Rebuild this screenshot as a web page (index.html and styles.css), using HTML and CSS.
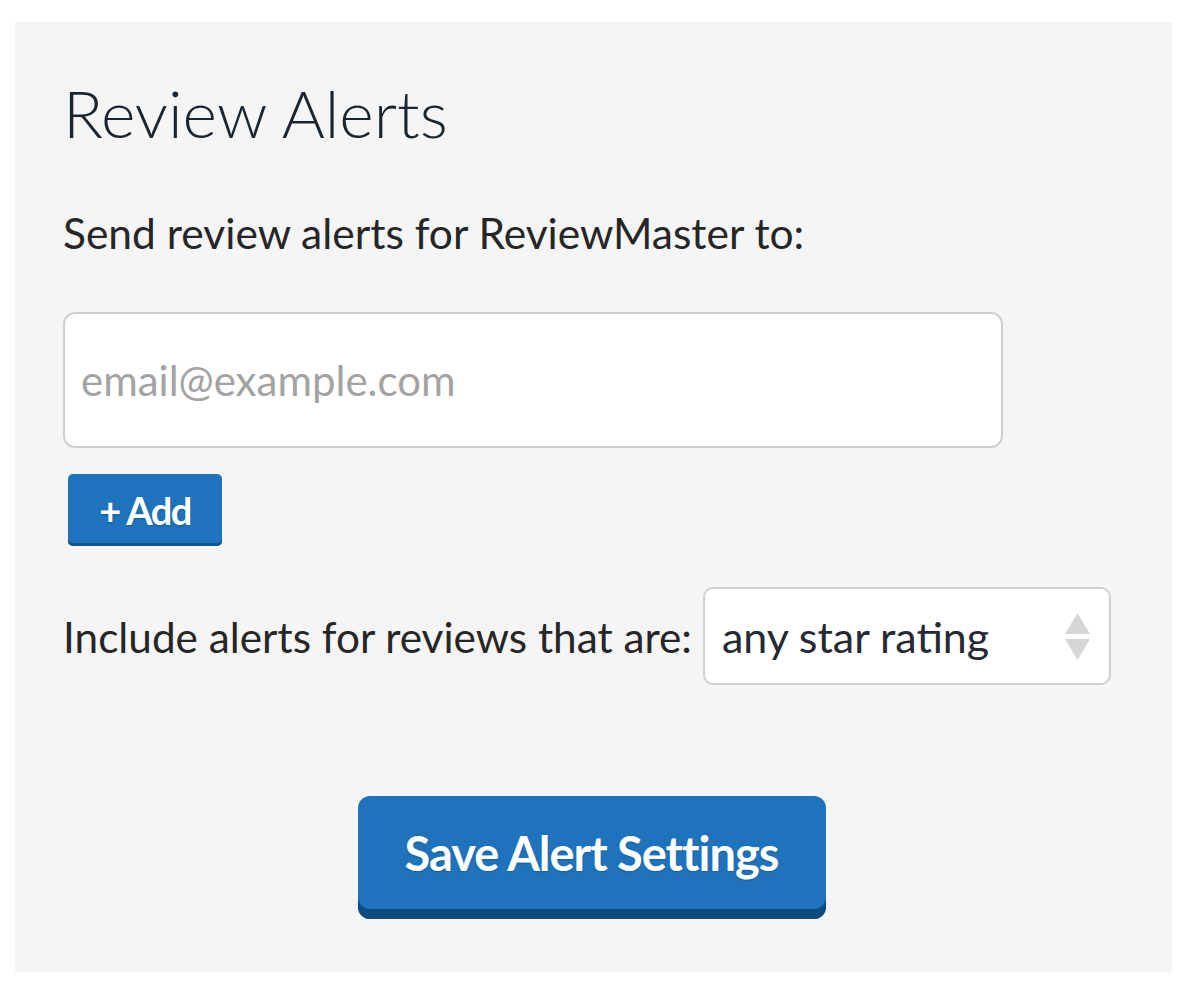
FILE: index.html
```html
<!DOCTYPE html>
<html>
<head>
<meta charset="utf-8">
<link rel="stylesheet" href="styles.css">
</head>
<body>
<div class="panel">
  <h1 class="title">Review Alerts</h1>
  <p class="lead">Send review alerts for ReviewMaster to:</p>
  <input class="email" type="text" placeholder="email@example.com">
  <button class="btn btn-add">+ Add</button>
  <div class="row">
    <span class="row-label">Include alerts for reviews that are:</span>
    <div class="select">
      <span class="select-value">any star rating</span>
      <svg class="select-arrows" width="25" height="47" viewBox="0 0 25 47">
        <path d="M12.5 0 L25 21 L0 21 Z" fill="#d6d6d6"/>
        <path d="M0 26 L25 26 L12.5 47 Z" fill="#d6d6d6"/>
      </svg>
    </div>
  </div>
  <div class="actions">
    <button class="btn btn-save">Save Alert Settings</button>
  </div>
</div>
</body>
</html>
```

FILE: styles.css
```css
html, body {
  margin: 0;
  padding: 0;
  background: #ffffff;
}
body {
  font-family: Lato, "Open Sans", sans-serif;
  color: #222;
}
.panel {
  box-sizing: border-box;
  margin: 22px 10px 0 15px;
  width: 1157px;
  height: 950px;
  background: #f5f5f5;
  padding: 51px 0 0 48px;
  display: flex;
  flex-direction: column;
  align-items: flex-start;
}
.title {
  margin: 0;
  font-weight: 300;
  font-size: 66px;
  line-height: 80px;
  color: #1b2530;
}
.lead {
  margin: 54px 0 0 0;
  font-size: 42.5px;
  line-height: 52px;
  font-weight: 400;
  color: #262626;
}
.email {
  box-sizing: border-box;
  margin-top: 53px;
  width: 940px;
  height: 136px;
  border: 2px solid #cfcfcf;
  border-radius: 12px;
  background: #fff;
  padding: 0 16px;
  font-family: Lato, sans-serif;
  font-size: 42px;
  outline: none;
}
.email::placeholder {
  color: #a3a3a3;
}
.btn {
  font-family: Lato, sans-serif;
  font-weight: 700;
  color: #fff;
  background: #1e73bc;
  border: none;
  cursor: pointer;
  text-shadow: 0 1px 2px rgba(0,0,0,0.2);
}
.btn-add {
  margin: 26px 0 0 5px;
  width: 154px;
  height: 72px;
  border-radius: 5px;
  font-size: 38px;
  letter-spacing: -1.5px;
  box-shadow: inset 0 -3px 0 #13568f;
}
.row {
  margin-top: 41px;
  display: flex;
  align-items: center;
  gap: 11px;
}
.row-label {
  font-size: 42.3px;
  color: #262626;
}
.select {
  box-sizing: border-box;
  width: 408px;
  height: 98px;
  border: 2px solid #d0d0d0;
  border-radius: 10px;
  background: #fff;
  display: flex;
  align-items: center;
  justify-content: space-between;
  padding: 0 19px 0 17px;
}
.select-value {
  font-size: 43px;
  color: #262a35;
}
.actions {
  align-self: stretch;
  display: flex;
  justify-content: center;
  padding-right: 52px;
  margin-top: 111px;
}
.btn-save {
  width: 468px;
  height: 123px;
  border-radius: 12px;
  font-size: 47px;
  letter-spacing: -1px;
  padding-bottom: 10px;
  box-shadow: inset 0 -10px 0 #0f4a7e;
}
```
